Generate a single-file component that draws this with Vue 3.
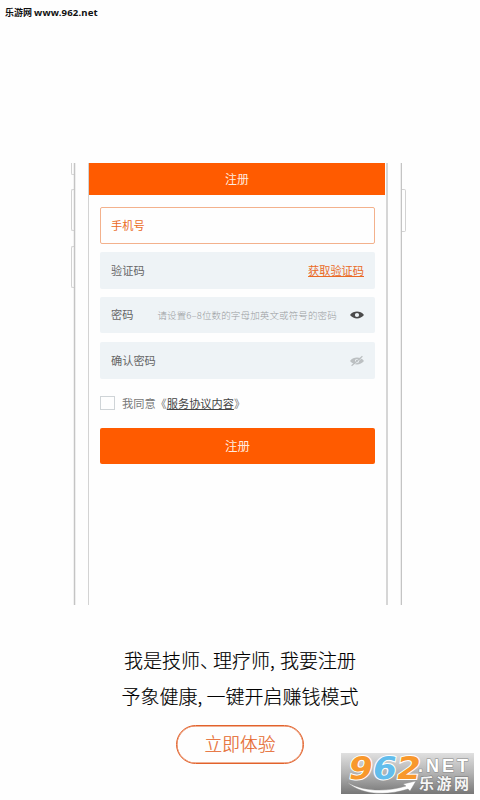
<template>
  <div class="page">
    <div class="site">乐游网 <span>www.962.net</span></div>

    <div class="phone">
      <div class="edge left">
        <i class="key mute"></i>
        <i class="key up"></i>
        <i class="key down"></i>
      </div>
      <div class="screen">
        <div class="bar">注册</div>
        <div class="form">
          <div v-for="f in fields" :key="f.label" class="field" :class="{ active: f.active }">
            <span class="label">{{ f.label }}</span>
            <span v-if="f.hint" class="hint">{{ f.hint }}</span>
            <a v-if="f.link" class="code">{{ f.link }}</a>
            <svg v-if="f.icon" class="eye" :class="f.icon" viewBox="0 0 14 12">
              <path
                fill-rule="evenodd"
                d="M0 6C2 3.600 4.300 2.600 7 2.600S12 3.600 14 6C12 8.400 9.700 9.400 7 9.400S2 8.400 0 6ZM7 3.900A2.100 2.100 0 1 0 7 8.100A2.100 2.100 0 1 0 7 3.900Z"
              />
              <circle v-if="f.icon === 'closed'" cx="7" cy="6" r="1.200" />
              <template v-if="f.icon === 'closed'">
                <path class="gap" d="M2.200 11.600L13 2" />
                <path class="slash" d="M1.600 10.800L12.400 1.200" />
              </template>
            </svg>
          </div>
          <div class="agree">
            <i class="box"></i>
            <span>我同意《<u>服务协议内容</u>》</span>
          </div>
          <button class="submit">注册</button>
        </div>
      </div>
      <div class="edge right">
        <i class="key power"></i>
      </div>
    </div>

    <div class="slogan">
      <p><span>我是技师</span><span class="pause">、</span><span>理疗师</span><span class="comma">,</span><span>我要注册</span></p>
      <p><span>予象健康</span><span class="comma narrow">,</span><span>一键开启赚钱模式</span></p>
    </div>
    <button class="start">立即体验</button>

    <svg class="mark" viewBox="0 0 133 41">
      <defs>
        <linearGradient id="shade" x1="0" y1="0" x2="0" y2="1">
          <stop offset="0" stop-color="#e0e0e0" />
          <stop offset="0.5" stop-color="#b2b2b2" />
          <stop offset="1" stop-color="#777" />
        </linearGradient>
      </defs>
      <rect width="133" height="41" fill="url(#shade)" />
      <path class="swoosh" d="M6 29C22 39 46 39 65 33L62 31L75 28L69 38L67 36C45 43 20 42 6 29Z" />
      <g class="digits" transform="translate(0 25.5) skewX(-10)">
        <text x="6" y="0" textLength="24" lengthAdjust="spacingAndGlyphs" fill="#f8982c">9</text>
        <text x="30" y="0" textLength="24" lengthAdjust="spacingAndGlyphs" fill="#62bdec">6</text>
        <text x="54" y="0" textLength="24" lengthAdjust="spacingAndGlyphs" fill="#f8982c">2</text>
      </g>
      <text class="net" x="77" y="19">.NET</text>
      <text class="cn" x="78" y="36" textLength="50">乐游网</text>
    </svg>
  </div>
</template>

<script setup>
const fields = [
  { label: "手机号", active: true },
  { label: "验证码", link: "获取验证码" },
  { label: "密码", hint: "请设置6–8位数的字母加英文或符号的密码", icon: "open" },
  { label: "确认密码", icon: "closed" },
];
</script>

<style>
body {
  margin: 0;
  background: #fefefe;
}
</style>

<style scoped>
.page {
  position: relative;
  width: 480px;
  height: 800px;
  overflow: hidden;
  display: flex;
  flex-direction: column;
  align-items: center;
  background: #fefefe;
  font-family: "Noto Sans CJK SC", sans-serif;
  font-weight: 300;
}

.site {
  align-self: flex-start;
  box-sizing: border-box;
  height: 163px;
  padding: 6px 0 0 5px;
  font-size: 9px;
  line-height: 14px;
  font-weight: 700;
  color: #111;
  white-space: nowrap;
}
.site span {
  font-family: "Noto Sans", sans-serif;
  font-size: 9.6px;
  letter-spacing: 0.15px;
}

/* phone frame, cropped at the top and bottom */
.phone {
  display: flex;
  flex: none;
  align-self: flex-start;
  height: 442px;
  margin-left: 74px;
}
.edge {
  position: relative;
  box-sizing: border-box;
  width: 14px;
}
.edge.left {
  border-left: 1px solid #c4c4c4;
  box-shadow: -1px 0 #f1f1f1, inset 1px 0 #eee;
}
.edge.right {
  border-right: 1px solid #c4c4c4;
  box-shadow: inset -1px 0 #eee;
}
.key {
  position: absolute;
  box-sizing: border-box;
  width: 3px;
  left: -4px;
  border: 1px solid #d2d2d2;
  border-right: 0;
  border-radius: 2px 0 0 2px;
}
.mute {
  top: 0;
  height: 12px;
  border-top: 0;
  border-top-left-radius: 0;
}
.up {
  top: 26px;
  height: 42px;
}
.down {
  top: 83px;
  height: 42px;
}
.power {
  top: 26px;
  left: 14px;
  width: 4px;
  height: 43px;
  border: 1px solid #d2d2d2;
  border-left: 0;
  border-radius: 0 2px 2px 0;
}

.screen {
  box-sizing: border-box;
  width: 300px;
  border-left: 1px solid #d3d3d3;
  border-right: 2px solid #d6d6d6;
}
.bar {
  width: 296px;
  height: 32px;
  line-height: 31px;
  text-align: center;
  font-size: 12px;
  font-weight: 400;
  color: #ffeadf;
  background: #ff5b00;
}
.form {
  padding: 12px 11px 0;
  width: 275px;
}
.field {
  display: flex;
  align-items: center;
  box-sizing: border-box;
  height: 37px;
  margin-bottom: 8px;
  padding: 0 11px;
  border-radius: 2px;
  background: #eef3f6;
  font-size: 11.2px;
  line-height: 16px;
  color: #666;
  white-space: nowrap;
}
.field:nth-child(3) {
  height: 36px;
  margin-bottom: 9px;
}
.field.active {
  padding-left: 10px;
  background: #fefefe;
  border: 1px solid #f3b18c;
  color: #ea6a25;
}
.label,
.code {
  font-weight: 400;
  padding-bottom: 2px;
}
.hint {
  margin-left: 24px;
  padding-bottom: 1px;
  font-size: 9.5px;
  letter-spacing: 0.14px;
  color: #999c9e;
}
.code {
  margin-left: auto;
  color: #ea6a25;
  text-decoration: underline;
  text-underline-offset: 1px;
}
.eye {
  width: 14px;
  height: 12px;
  margin-left: auto;
  fill: #4b4b4b;
}
.eye.closed {
  fill: #bcc0c2;
}
.gap {
  stroke: #eef3f6;
  stroke-width: 0.6;
}
.slash {
  stroke: #bcc0c2;
  stroke-width: 1.2;
}

.agree {
  display: flex;
  align-items: center;
  height: 16px;
  margin-top: 16px;
  font-size: 11.2px;
  font-weight: 400;
  line-height: 16px;
  color: #777;
}
.agree u {
  color: #444;
  text-underline-offset: 1px;
}
.box {
  box-sizing: border-box;
  width: 15px;
  height: 14px;
  margin-right: 7px;
  border: 1px solid #cfd4d7;
}
.submit {
  display: block;
  width: 275px;
  height: 36px;
  margin-top: 17px;
  padding: 0 0 2px;
  border: 0;
  border-radius: 2px;
  background: #ff5b00;
  color: #ffeadf;
  font: 400 12.5px "Noto Sans CJK SC", sans-serif;
}

.slogan {
  margin-top: 37px;
  font-size: 19px;
  line-height: 36px;
  color: #000;
  -webkit-text-stroke: 0.15px #000;
  white-space: nowrap;
}
.slogan p {
  display: flex;
  justify-content: center;
  margin: 0;
}
.pause {
  width: 13px;
  font-feature-settings: "halt";
}
.comma {
  width: 10px;
}
.comma.narrow {
  width: 9px;
}
.start {
  box-sizing: border-box;
  width: 128px;
  height: 39px;
  margin-top: 11px;
  padding: 0 0 3px;
  border: 1px solid #e2622b;
  border-radius: 20px;
  box-shadow: inset 0 0 0 0.5px #e2622b;
  background: none;
  color: #e5672c;
  font: 300 17.7px "Noto Sans CJK SC", sans-serif;
  -webkit-text-stroke: 0.2px #e5672c;
}

/* watermark lies over the page corner */
.mark {
  position: absolute;
  left: 341px;
  top: 753px;
  width: 133px;
  height: 41px;
}
.digits text {
  font: 700 31px "DejaVu Sans", sans-serif;
  stroke: #fff;
  stroke-width: 2px;
  paint-order: stroke;
}
.net {
  font: 700 18px "Liberation Sans", sans-serif;
  letter-spacing: 3px;
  fill: #fff;
  stroke: #888;
  stroke-width: 1px;
  paint-order: stroke;
}
.cn {
  font: 700 15px "Noto Sans CJK SC", sans-serif;
  fill: #f5f5f5;
  stroke: #777;
  stroke-width: 1px;
  paint-order: stroke;
}
.swoosh {
  fill: #fff;
  stroke: #888;
  stroke-width: 0.4px;
}
</style>
